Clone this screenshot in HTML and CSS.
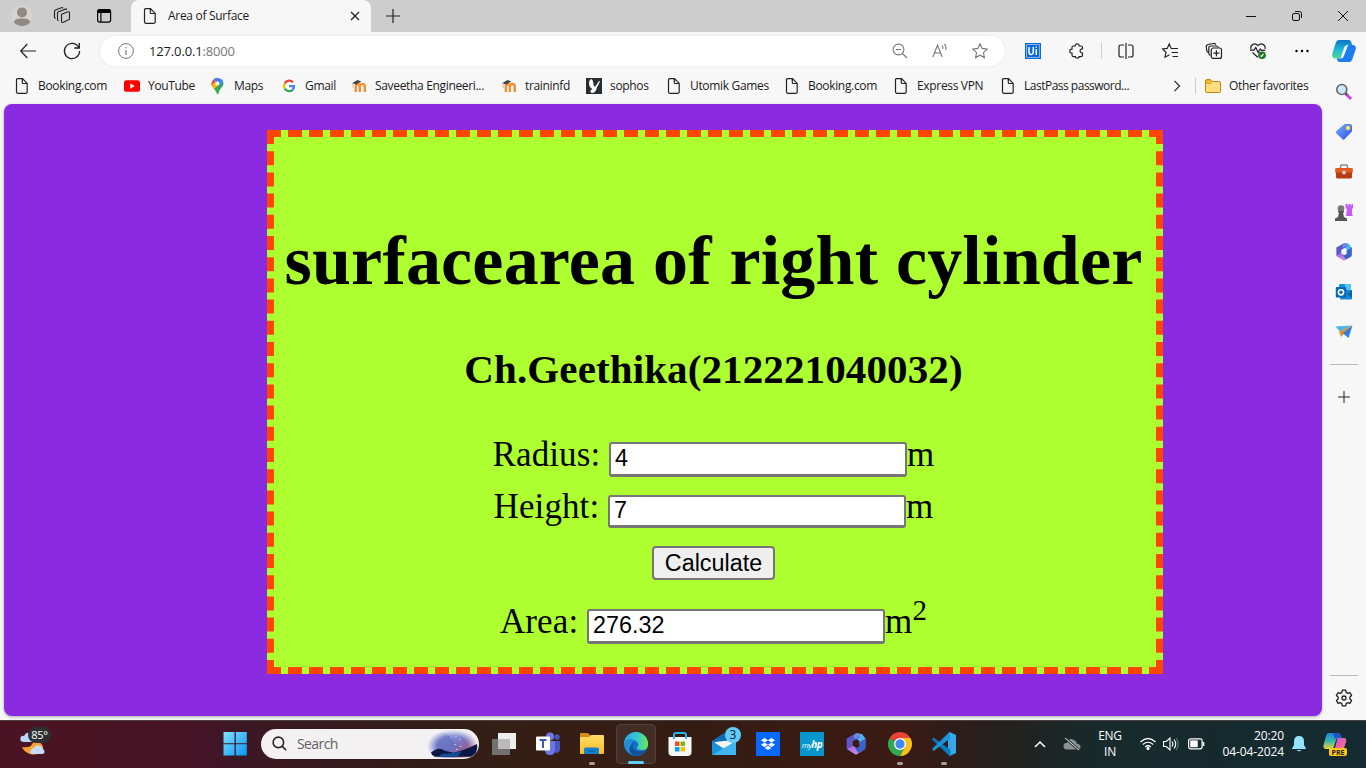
FILE: index.html
```html
<!DOCTYPE html>
<html lang="en">
<head>
<meta charset="utf-8">
<title>Area of Surface</title>
<link rel="stylesheet" href="styles.css">
</head>
<body>
<svg class="defs" width="0" height="0">
  <defs>
    <linearGradient id="gBlue" x1="0" y1="0" x2="1" y2="1"><stop offset="0" stop-color="#6fb4ff"/><stop offset="1" stop-color="#3b4be8"/></linearGradient>
    <linearGradient id="gWin" x1="0" y1="0" x2="1" y2="1"><stop offset="0" stop-color="#7fe0ff"/><stop offset="1" stop-color="#0a94f5"/></linearGradient>
    <linearGradient id="gFolder" x1="0" y1="0" x2="0" y2="1"><stop offset="0" stop-color="#ffdc6b"/><stop offset="1" stop-color="#f9bd22"/></linearGradient>
    <linearGradient id="gEdge" x1="0" y1="0" x2="1" y2="0"><stop offset="0" stop-color="#2aa7e8"/><stop offset=".55" stop-color="#35c8d2"/><stop offset="1" stop-color="#6fe64d"/></linearGradient>
    <linearGradient id="gPurple" x1="0" y1="0" x2="1" y2="1"><stop offset="0" stop-color="#a05be0"/><stop offset="1" stop-color="#d9a0ef"/></linearGradient>
    <linearGradient id="gSky" x1="0" y1="0" x2="1" y2="1"><stop offset="0" stop-color="#b8d4ff"/><stop offset=".5" stop-color="#7778ca"/><stop offset="1" stop-color="#bd3b48"/></linearGradient>
    <linearGradient id="gCop" x1="0" y1="0" x2="0" y2="1"><stop offset="0" stop-color="#0875c9"/><stop offset=".5" stop-color="#21b5d7"/><stop offset="1" stop-color="#50d993"/></linearGradient>
    <linearGradient id="gPreA" x1="0" y1="0" x2="0" y2="1"><stop offset="0" stop-color="#1e7ee8"/><stop offset=".5" stop-color="#35b8a8"/><stop offset="1" stop-color="#f2cf3a"/></linearGradient>
    <linearGradient id="gPink" x1="0" y1="0" x2="1" y2="1"><stop offset="0" stop-color="#b15cff"/><stop offset=".6" stop-color="#f3629c"/><stop offset="1" stop-color="#ff9d55"/></linearGradient>
    <radialGradient id="gFade"><stop offset=".6" stop-color="#fff"/><stop offset="1" stop-color="#000"/></radialGradient>
    <mask id="mFade"><ellipse cx="26" cy="16" rx="26" ry="17" fill="url(#gFade)"/></mask>
    <symbol id="page" viewBox="0 0 16 16"><path d="M3.500.7h5l4.700 4.700v8.300a1.500 1.500 0 0 1-1.500 1.600H4a1.500 1.500 0 0 1-1.500-1.600V1.700a1 1 0 0 1 1-1zM8.300.9v3.600a1 1 0 0 0 1 1h3.700" fill="none" stroke="#222" stroke-width="1.200"/></symbol>
    <symbol id="moodle" viewBox="0 0 16 16"><path d="M4.800 14V8.500c0-3 4-3 4 0V14M8.800 8.500c0-3.400 5-3.400 5 0V14" fill="none" stroke="#f59131" stroke-width="2.400"/><path d="M1 5.200 6.500 2l3.900 1.500L5 6.500z" fill="#444"/><path d="M2 5v5" stroke="#d2bca8"/></symbol>
    <symbol id="m365" viewBox="0 0 20 20"><path d="M10 .3 15.500 1 18.600 5v8L13 9.500V7L8 4z" fill="#4fb4ee"/><path d="M10 .3 1.500 5v9.500L7 11.500V7.800L13 4 14.500.8z" fill="#5c58cc"/><path d="m10 .3 4.500.5 1 .6L9 5.600 8 3z" fill="#79aef0" opacity=".6"/><path d="m1.500 14.500 5.500-3 4 2.300 5.500 2.200-6.500 3.700z" fill="url(#gPurple)"/><path d="M13 8.500 18.600 5v9.700L12 18.200 8.500 13l1.500 1 3-2z" fill="#3a62ca"/></symbol>
    <symbol id="copilot" viewBox="0 0 24 22"><path d="M7.500 0h8.700c2.100 0 3 1 3.400 3l.4 2h-5l-4.400 11c-.8 2-2 2.600-3.600 2.600H3C.6 18.600-.4 16 .4 13L3.700 3C4.400 1 5.400 0 7.500 0z" fill="url(#gCop)"/><path d="M16.600 22H7.900c-2 0-2.600-1.300-3.100-3.400H8c2 0 3-1 3.700-3l3-8C15.500 5.600 16.600 5 18 5h3c2.300 0 3.400 2 2.600 4.800l-3.300 9.400c-.7 2-1.700 2.800-3.700 2.800z" fill="#1b7df0"/><path d="M12.500 6.500c1-1 2.500-1.300 3.500-1.300l-4.300 11c-.6 1.400-1.700 2.200-3.200 2.300z" fill="#eefaff"/></symbol>
  </defs>
</svg>

<header class="tabs">
  <svg class="avatar" viewBox="0 0 22 22"><circle cx="11" cy="11" r="10.500" fill="#d7d4cf"/><circle cx="11" cy="7.400" r="5" fill="#8f8a84"/><path d="M2.800 17.200c1-3 3-3.600 8.200-3.600s7.200.6 8.200 3.600A10.500 10.500 0 0 1 2.800 17.200z" fill="#8f8a84"/></svg>
  <svg class="workspaces" viewBox="0 0 18 18" fill="none" stroke="#222" stroke-width="1.100"><path d="m8.500 7.300 6.500-2.500q1.500-.3 1.500 1v6.400L10 15.500q-1.500.3-1.500-1V7.300zM5.500 13.700q-1-.5-1-1.500V6.200q0-1 1-1.500l7.500-2.800 1 .6M2.500 11.600q-1-.5-1-1.500V4.600q0-1 1-1.500l6.500-2.500 1.200.4"/></svg>
  <svg class="tabmenu" viewBox="0 0 16 16"><rect x="1.600" y="1.600" width="13" height="12.500" rx="2" fill="none" stroke="#000" stroke-width="1.200"/><path d="M1.500 5V3q0-1.700 1.700-1.700H13Q14.700 1.300 14.700 3v2z"/><path d="M4.900 5v9" stroke="#000" stroke-width="1.200"/></svg>
  <div class="tab">
    <svg class="i16" viewBox="0 0 16 16"><use href="#page"/></svg>
    <span class="tab-title">Area of Surface</span>
    <svg class="close" viewBox="0 0 10 10"><path d="m1 1 8 8M9 1 1 9" stroke="#222" stroke-width="1.300"/></svg>
  </div>
  <svg class="newtab" viewBox="0 0 14 14"><path d="M7 0v14M0 7h14" stroke="#222" stroke-width="1.200"/></svg>
  <div class="window-buttons">
    <svg viewBox="0 0 12 12"><path d="M1 6.500h10" stroke="#111"/></svg>
    <svg viewBox="0 0 12 12" fill="none" stroke="#111"><rect x="1.500" y="3.500" width="7" height="7" rx="1.500"/><path d="M4 1.500h4.500q2 0 2 2V8"/></svg>
    <svg viewBox="0 0 12 12"><path d="m1 1 10 10M11 1 1 11" stroke="#111"/></svg>
  </div>
</header>

<nav class="toolbar">
  <svg class="back" viewBox="0 0 16 16" fill="none" stroke="#222" stroke-width="1.200"><path d="M16 8H.8M7.300 1 .7 8l6.600 7"/></svg>
  <svg class="reload" viewBox="0 0 18 18" fill="none" stroke="#222" stroke-width="1.300"><path d="M15.800 5.600A7.600 7.600 0 1 0 16.600 9M16.300 1v5h-5"/></svg>
  <div class="address">
    <svg class="i16 info" viewBox="0 0 16 16"><circle cx="8" cy="8" r="7.400" fill="none" stroke="#767676"/><path d="M8 7v5M8 4v1.300" stroke="#767676" stroke-width="1.200"/></svg>
    <span class="url">127.0.0.1<i>:8000</i></span>
    <svg class="i16 zoom" viewBox="0 0 16 16" fill="none" stroke="#777" stroke-width="1.100"><circle cx="6.500" cy="6.500" r="5.400"/><path d="m10.500 10.500 4.500 4.500M4 6.500h5"/></svg>
    <svg class="i16 aloud" viewBox="0 0 16 16" fill="none" stroke="#777" stroke-width="1.100"><path d="M.8 14 5.500 2.300 10.200 14M2.500 10h6M10 2.500q1.500 1.500.7 3.500M12.300.8q2.600 2.700 1.200 6"/></svg>
    <svg class="i16" viewBox="0 0 16 16" fill="none" stroke="#777" stroke-width="1.100"><path d="m8 .9 2.100 4.500 5.100.7-3.700 3.500.9 5L8 12.200l-4.400 2.400.9-5L.8 6.100l5.100-.7z"/></svg>
  </div>
  <div class="tools">
    <svg class="t" viewBox="0 0 16 16"><rect width="16" height="16" fill="#0b68dd"/><rect x="1.700" y="1.700" width="12.600" height="12.600" fill="none" stroke="#d9e8fb" stroke-width=".6"/><path d="M4 4v5q0 2.500 2 2.500T8.300 9V4M11.300 6v6M11.300 3.600v1.200" fill="none" stroke="#fff" stroke-width="1.500"/></svg>
    <svg class="t" viewBox="0 0 16 16" fill="none" stroke="#222" stroke-width="1.200"><path d="M4 3h2.300C6 .2 10.500.2 10.200 3H12q1.500 0 1.500 1.500v1.300c-3.200-.3-3.200 4.500 0 4.200V12q0 1.600-1.500 1.600h-1.800c.3 2-4 2-3.900 0H4.500Q3 13.600 3 12V10.200C0 10.400 0 6 3 6.200V4.500Q3 3 4 3z"/></svg>
    <div class="sep"></div>
    <svg class="t" viewBox="0 0 16 16" fill="none" stroke="#222" stroke-width="1.200"><path d="M6 2H3Q1 2 1 4v8q0 2 2 2h3M10 2h3q2 0 2 2v8q0 2-2 2h-3M8 0v16"/></svg>
    <svg class="t" viewBox="0 0 16 16" fill="none" stroke="#222" stroke-width="1.200"><path d="M16 5.500H9.200L7.200 1 5.200 5.400.6 6 4 9.400 3 14.200l4.500-2.400M9.500 9.500H16M10.500 13.500H16"/></svg>
    <svg class="t" viewBox="0 0 16 16" fill="none" stroke="#222" stroke-width="1.200"><path d="M2.300 9.500Q1 9 .8 7.800L.3 4Q0 2 2 1.500l5.500-1q1.800-.2 2.300 1.300M4.500 12.500Q2.800 12 2.800 10V5q0-2 2-2h5.500q1.500 0 2.200 1.500"/><rect x="5.300" y="5" width="10.200" height="10.400" rx="2"/><path d="M10.400 7.200v6M7.400 10.200h6"/></svg>
    <svg class="t" viewBox="0 0 16 16" fill="none" stroke="#222" stroke-width="1.200"><path d="M1 6C0 1.500 5-.8 8 2.700 11-.8 16 1.500 15 6M0 7.200h4L5.800 4.500l2.400 5 2-3.500 1.300 1.300H15M2.500 9.500 8 14.500"/><circle cx="12" cy="12.200" r="3.800" fill="#15771b" stroke="none"/><path d="m10.500 12.500 1 1 2-2.600" stroke="#fff"/></svg>
    <svg class="t" viewBox="0 0 16 16"><circle cx="2.500" cy="8" r="1.200"/><circle cx="8" cy="8" r="1.200"/><circle cx="13.500" cy="8" r="1.200"/></svg>
  </div>
  <svg class="cop" viewBox="0 0 24 22"><use href="#copilot"/></svg>
</nav>

<nav class="bookmarks">
  <a><svg class="i16"><use href="#page"/></svg><span>Booking.com</span></a>
  <a><svg class="i16" viewBox="0 0 16 16"><rect y="2.300" width="16" height="11.500" rx="2.600" fill="#f00"/><path d="m6.300 5.500 4.500 2.600-4.500 2.600z" fill="#fff"/></svg><span>YouTube</span></a>
  <a><svg class="i16" viewBox="0 0 16 16"><path d="M7 16C6 11.500 1.500 9.500 1.500 5.600L8 5l5.500-.8c.4 5-4.500 6-5 11.800z" fill="#35a853"/><path d="M2.900 2.200A5.500 5.500 0 0 1 9.500.3L6 5 2 8.500C1.200 6 1.500 3.500 2.900 2.200z" fill="#ea4335"/><path d="M4 1.200Q8-1.500 12 1.600q1 .9 1.300 2L8 9 5 4.500z" fill="#4285f4"/><path d="m1.800 7 4-4 2 5-4 3z" fill="#fbbc04"/><circle cx="7.500" cy="5.500" r="2" fill="#fff"/></svg><span>Maps</span></a>
  <a><svg class="i16" viewBox="0 0 16 16" fill="none" stroke-width="2.300"><circle cx="8" cy="8" r="8" fill="#fff"/><path d="M12 4.300A5 5 0 0 0 3.700 5.500" stroke="#ea4335"/><path d="M3.700 5.500a5 5 0 0 0 0 5" stroke="#fbbc04"/><path d="M3.700 10.500A5 5 0 0 0 11.600 11.800" stroke="#34a853"/><path d="M11.500 11.900Q13 10.500 13 8.200H8" stroke="#4285f4"/></svg><span>Gmail</span></a>
  <a><svg class="i16"><use href="#moodle"/></svg><span>Saveetha Engineeri...</span></a>
  <a><svg class="i16"><use href="#moodle"/></svg><span>traininfd</span></a>
  <a><svg class="i16" viewBox="0 0 16 16"><rect width="16" height="16" fill="#292d32"/><path d="M5 1q2.300.5 2.500 6L9 9l4-6 1 .5L10.700 10q-.7 5-5.200 5l-1.300-2 2-2Q2 8 3.300 3z" fill="#fff"/></svg><span>sophos</span></a>
  <a><svg class="i16"><use href="#page"/></svg><span>Utomik Games</span></a>
  <a><svg class="i16"><use href="#page"/></svg><span>Booking.com</span></a>
  <a><svg class="i16"><use href="#page"/></svg><span>Express VPN</span></a>
  <a class="tight"><svg class="i16"><use href="#page"/></svg><span>LastPass password...</span></a>
  <svg class="more" viewBox="0 0 8 14"><path d="m1 1 6 6-6 6" fill="none" stroke="#222" stroke-width="1.300"/></svg>
  <a class="other"><svg class="i16" viewBox="0 0 16 16"><path d="M.5 3q0-1.500 1.500-1.500h3.500L7.500 3.500H14q1.500 0 1.500 1.500v8q0 1.500-1.500 1.500H2Q.5 14.500.5 13z" fill="#ffdc7c" stroke="#b78a18"/><path d="M.8 3q0-1.200 1.200-1.200h3.500l1.600 1.800-1.600 1.900H.8z" fill="#f4bd27" stroke="#b78a18" stroke-width=".6"/></svg><span>Other favorites</span></a>
</nav>

<div class="middle">
  <main class="viewport">
    <div class="box">
      <h1>surfacearea of right cylinder</h1>
      <h3>Ch.Geethika(212221040032)</h3>
      <div class="row">Radius: <input type="text" value="4">m</div>
      <div class="row">Height: <input class="short" type="text" value="7">m</div>
      <div class="row action"><button type="button">Calculate</button></div>
      <div class="row result">Area: <input type="text" value="276.32">m<sup>2</sup></div>
    </div>
  </main>
  <aside class="sidebar">
    <svg viewBox="0 0 18 18"><path d="m11 11 5 5" stroke="#c645f2" stroke-width="3"/><path d="m10 10 2 2" stroke="#555" stroke-width="2"/><circle cx="6.800" cy="6.500" r="5" fill="#cceafd" stroke="#666" stroke-width="1.600"/></svg>
    <svg viewBox="0 0 18 18"><path d="M9.500 1h5.500q2 0 2 2v5.500l-7.500 7.700q-1 1-2 0L1.200 10.300q-.8-1 0-2z" fill="url(#gBlue)"/><circle cx="13" cy="5" r="2.200" fill="#ffd44b"/><circle cx="13" cy="5" r=".8" fill="#fff"/></svg>
    <svg viewBox="0 0 18 18"><path d="M5.500 5V3.500q0-1.500 1.500-1.500h4q1.500 0 1.500 1.500V5" fill="none" stroke="#888" stroke-width="1.500"/><rect x=".2" y="5" width="17.600" height="5" rx="1" fill="#e65722"/><path d="M1 9.500h16V14q0 1.500-1.500 1.500h-13Q1 15.500 1 14z" fill="#b83b12"/><circle cx="9" cy="9.500" r="2" fill="#ccc"/></svg>
    <svg viewBox="0 0 18 18"><path d="M10.500 1h2v1.500h1V1h2v1.500h1V1H18v4l-1 1v5l1 2h-7l1-7-1.500-1z" fill="#c55cf5"/><circle cx="6" cy="5.500" r="3.300" fill="#777"/><path d="M3 8h6v1.500H8L9 14l3 1.500V18H0v-2.500L3 14l1-4.500H3z" fill="#555"/></svg>
    <svg viewBox="0 0 20 20"><use href="#m365"/></svg>
    <svg viewBox="0 0 18 18"><path d="M4 1.500Q4 1 5 1h10q1 0 1 1v5H4z" fill="#1594e3"/><path d="M10 1h6v6h-6z" fill="#52c8f5"/><path d="M5 7h12v8.500q0 1-1 1H6q-1 0-1-1z" fill="#1689d8"/><path d="m17 7-5 4 5 4z" fill="#0766b4"/><rect x=".8" y="4" width="10.500" height="10.500" rx="1" fill="#0967b7"/><circle cx="6" cy="9.300" r="2.600" fill="none" stroke="#fff" stroke-width="1.600"/></svg>
    <svg viewBox="0 0 18 18"><path d="M.5 3.500 17.500 2.500 5 8.500z" fill="#45b6f0"/><path d="m17.500 2.500-13.500 6L6 14l3-3z" fill="#e3952d"/><path d="m17.500 2.500-9.800 7.800L13.500 15z" fill="#2c83df"/></svg>
    <hr>
    <svg class="plus" viewBox="0 0 12 12"><path d="M6 0v12M0 6h12" stroke="#222"/></svg>
    <div class="spring"></div>
    <hr>
    <svg class="gear" viewBox="0 0 18 18" fill="none" stroke="#222" stroke-width="1.300"><path d="m7.300 1.200-.5 2.300-1.500.9-2.200-.7-1.700 2.900L3.100 8v2l-1.700 1.500 1.700 2.900 2.200-.7 1.500.9.500 2.200h3.400l.5-2.200 1.500-.9 2.200.7 1.700-2.900L14.900 10V8l1.700-1.400-1.700-2.900-2.200.7-1.500-.9-.5-2.300z" stroke-linejoin="round"/><circle cx="9" cy="9" r="2"/></svg>
  </aside>
</div>

<footer class="taskbar">
  <div class="weather">
    <svg viewBox="0 0 28 26"><path d="M4 12Q0 12 .3 8.500T4 6q2-4 5-3t3 9z" fill="#bed5fb"/><path d="M2 17q10 2 12-7c7 2 10 5 9 11Q17 26 10 24q-6-2-8-7z" fill="#f5a52e"/><path d="M12 24q-3-1-1-4 1-2 3-2 2-4 6-2 2 0 2.500 3 2 0 2 2.500T22 24z" fill="#c5dbff"/></svg>
    <span>85°</span>
  </div>
  <div class="apps">
    <div class="app"><svg viewBox="0 0 24 24"><path d="M.5 0h11v11.300H.5zm12.300 0h11v11.300h-11zM.5 12.200h11v11.300H.5zm12.300 0h11v11.300h-11z" fill="url(#gWin)"/></svg></div>
    <div class="search">
      <svg class="glass" viewBox="0 0 16 16" fill="none" stroke="#292929" stroke-width="1.700"><circle cx="6.800" cy="6.800" r="5.600"/><path d="m11 11 4 4"/></svg>
      <span>Search</span>
      <svg class="art" viewBox="0 0 52 28"><g mask="url(#mFade)"><path d="M0 0h52v28H0z" fill="url(#gSky)"/><path d="M0 8C15-4 24 3 31 18L20 25H0z" fill="#6471bd" opacity=".7"/></g><path d="M4 23q8-7 14-2l9 2 10-3 5-2 9-4q1 6-2 10l-4 3H8q-3-1-4-4z" fill="#0b1643"/><path d="M15 24q14 0 20-3l-3 6H12z" fill="#114d92"/><path d="M24 7h1v1h-1zm5-1h1v1h-1zm4 3h1v1h-1zm-5 5h1v1h-1zm6 2h1v1h-1zm-4 3h1v1h-1z" fill="#fff"/></svg>
    </div>
    <div class="app"><svg viewBox="0 0 24 24"><rect x="6" y="1" width="18" height="16" fill="#eee"/><path d="M0 7h18v16H0z" fill="#737170"/><path d="M6 7h12v10H6z" fill="#bbb"/></svg></div>
    <div class="app"><svg viewBox="0 0 24 24"><circle cx="14" cy="4.500" r="4" fill="#7078e4"/><circle cx="21" cy="5" r="2.700" fill="#4b55c1"/><path d="M17 9h7v8q0 4-5 4z" fill="#4b55c1"/><path d="M9 9h10v9q0 5-5 5t-5-5z" fill="#6d77e2"/><rect y="4.500" width="14" height="14" rx="1" fill="#fff"/><path d="M3.500 8h7M7 8v8" stroke="#4854bd" stroke-width="2"/></svg></div>
    <div class="app open"><svg viewBox="0 0 24 24"><path d="M0 2q0-1 1-1h7l2 2v5H0z" fill="#d48d10"/><path d="M0 6q0-1 1-1h8l2-2h12q1 0 1 1v17q0 1-1 1H0z" fill="url(#gFolder)"/><path d="M4 22v-5q0-1.500 1.500-1.500h12q1.500 0 1.500 1.500v5z" fill="#1580cf"/><path d="M8 19h7" stroke="#075998"/></svg></div>
    <div class="app active"><svg viewBox="0 0 24 24"><circle cx="12" cy="12" r="12" fill="#126fc1"/><path d="M0 12A12 12 0 0 1 24 12c0 4-2 6-6 6q-6 0-5-2.500Q16 12 12 9 7 6 3 9z" fill="url(#gEdge)"/><path d="M11 9C5 9 6 21 17 22A12 12 0 0 1 0 11Q5 4 11 9z" fill="#218ed3"/><path d="M10.500 10C4 17 14 22 22 18q-5 7-13 5-8-6 1.500-13z" fill="#124f96"/></svg></div>
    <div class="app"><svg viewBox="0 0 24 24"><path d="M6 7V3q0-2 2-2h8q2 0 2 2v4" fill="none" stroke="#27b5ed" stroke-width="2"/><path d="M.5 5h23v15q0 4-4 4h-15q-4 0-4-4z" fill="#f7f7f7"/><path d="M6 5v2M18 5v2" stroke="#27b5ed" stroke-width="2"/><path d="M7 9.500h4.500V14H7z" fill="#f25022"/><path d="M12.500 9.500H17V14h-4.500z" fill="#7fba00"/><path d="M7 15h4.500v4.500H7z" fill="#00a4ef"/><path d="M12.500 15H17v4.500h-4.500z" fill="#ffb900"/></svg></div>
    <div class="app mail"><svg viewBox="0 0 24 24"><path d="M0 9 12 1l12 8v14H0z" fill="#116bb5"/><path d="m3 10 18-2v7l-9 3-9-3z" fill="#f6f6f6"/><path d="m0 9 14 9L0 23z" fill="#1a91dc"/><path d="M24 9v14H0z" fill="#3fb4ee"/></svg><b>3</b></div>
    <div class="app"><svg viewBox="0 0 24 24"><path d="M0 0h24v24H0z" fill="#0868fd"/><path d="m8.500 6 3.500 2.200L8.500 10.500 5 8.200zm7 0L19 8.200l-3.500 2.300L12 8.200zm-7 4.500L12 12.800 8.500 15 5 12.800zm7 0 3.500 2.300-3.500 2.200-3.500-2.200zM12 13.700l3.400 2.200L12 18.100l-3.400-2.200z" fill="#fff"/></svg></div>
    <div class="app hp"><span>my<b>hp</b></span></div>
    <div class="app"><svg class="m" viewBox="0 0 20 20"><use href="#m365"/></svg></div>
    <div class="app open"><svg viewBox="0 0 24 24"><path d="M12 12 1.600 6A12 12 0 0 1 22.400 6z" fill="#ea4335"/><path d="M12 12 1.600 6A12 12 0 0 0 12 24l5-9z" fill="#31a853"/><path d="M12 6h10.400A12 12 0 0 1 12 24l5-9z" fill="#fbc116"/><circle cx="12" cy="12" r="6" fill="#fff"/><circle cx="12" cy="12" r="4.700" fill="#4285f4"/></svg></div>
    <div class="app open"><svg viewBox="0 0 24 24"><path d="M17.500 0 24 3v18l-6.500 3-1.500-2V2z" fill="#37a8ee"/><path d="M18 6.500v11L1.500 5.500l-1.500 2L16.500 23l2 1z" fill="#087ac2"/><path d="m17.500 0 .5 6.500L1.700 19 0 17z" fill="#1d91da"/></svg></div>
  </div>
  <div class="tray">
    <svg class="chev" viewBox="0 0 12 8"><path d="m1 7 5-5 5 5" fill="none" stroke="#fff" stroke-width="1.500"/></svg>
    <svg class="cloud" viewBox="0 0 18 14"><path d="M4 12.500Q.5 12.500.5 9T4 6Q6 .5 10 2.500t3.500 4Q17.500 7 17.500 10T14 12.500z" fill="#8c9292"/><path d="m2 1 14 12" stroke="#253134" stroke-width="2.400"/><path d="m2 1 14 12" stroke="#e5e5e5"/></svg>
    <div class="lang">ENG<br>IN</div>
    <svg class="wifi" viewBox="0 0 16 14" fill="none" stroke="#fff" stroke-width="1.200"><path d="M.5 5q7.500-7 15 0M2.800 7.500q5.200-4.500 10.400 0M5.200 10q2.800-2.500 5.600 0"/><circle cx="8" cy="11.500" r="1" fill="#fff"/></svg>
    <svg class="sound" viewBox="0 0 16 14" fill="none" stroke="#fff" stroke-width="1.100"><path d="M.6 4.500h2.700L7 1v12L3.300 9.500H.6zM9 4.500q2 2.500 0 5M11 2.500q3.500 4.500 0 9"/><path d="M13.200 1q4 6 0 12" stroke="#65777a"/></svg>
    <svg class="battery" viewBox="0 0 17 12"><rect x=".6" y=".8" width="13.500" height="10" rx="2" fill="none" stroke="#fff" stroke-width="1.200"/><rect x="2.200" y="2.400" width="7.500" height="6.800" fill="#fff"/><path d="M15.500 4v4" stroke="#fff" stroke-width="1.600"/></svg>
    <div class="clock">20:20<br>04-04-2024</div>
    <svg class="bell" viewBox="0 0 14 16"><path d="M7 0q5 0 5 5.500V9l2 3.500v.5H0v-.5L2 9V5.500Q2 0 7 0zM4.500 14h5Q7 16.500 4.500 14z" fill="#91e3ff"/></svg>
    <svg class="pre" viewBox="0 0 24 24"><path d="M6 1h9q2.500 0 3.500 4.500h-4.500L10 17H3q-3 0-2.500-4L3 4q.7-3 3-3z" fill="url(#gPreA)"/><path d="M10 1h5q2.500 0 3.500 4.500h-5q-1 0-1.500 2z" fill="#1a55c8"/><path d="M14.500 6H21q3 0 2 4l-2 6-8 4H8q3 0 4-4z" fill="url(#gPink)"/><rect x="6" y="16" width="18" height="8" rx="2" fill="#ffc814"/><text x="15" y="22.600" text-anchor="middle">PRE</text></svg>
  </div>
</footer>
</body>
</html>
```
FILE: styles.css
```css
* { box-sizing: border-box; }
body { margin: 0; width: 1366px; height: 768px; overflow: hidden; display: flex; flex-direction: column; background: #f7f7f7; font: 12px/16px "Open Sans", sans-serif; color: #1b1b1b; }
svg { display: block; flex: none; overflow: visible; }
.defs { position: absolute; }
.i16 { width: 16px; height: 16px; }

.tabs { height: 32px; flex: none; background: #cdcdcd; display: flex; align-items: center; padding-left: 11px; }
.avatar { width: 22px; height: 22px; }
.workspaces { width: 18px; height: 18px; margin-left: 20px; }
.tabmenu { width: 16px; height: 16px; margin-left: 25px; }
.tab { width: 240px; height: 32px; margin-left: 19px; background: #f7f7f7; border-radius: 8px 8px 0 0; display: flex; align-items: center; padding: 0 11px; }
.tab-title { margin-left: 10px; flex: 1; letter-spacing: -.3px; }
.close { width: 10px; height: 10px; }
.newtab { width: 14px; height: 14px; margin-left: 15px; }
.window-buttons { margin-left: auto; display: flex; gap: 34px; padding-right: 17px; }
.window-buttons svg { width: 12px; height: 12px; }

.toolbar { height: 38px; flex: none; display: flex; align-items: center; padding-left: 20px; }
.back { width: 16px; height: 16px; }
.reload { width: 18px; height: 18px; margin-left: 27px; }
.address { width: 905px; height: 30px; margin-left: 19px; border-radius: 15px; background: #fff; box-shadow: 0 0 3px #e4e4e4; display: flex; align-items: center; padding: 0 17px 0 18px; }
.url { margin-left: 15px; flex: 1; font-size: 13px; letter-spacing: -.15px; }
.url i { font-style: normal; color: #767676; }
.zoom, .aloud { margin-right: 24px; }
.tools { margin-left: 20px; display: flex; gap: 28px; align-items: center; }
.tools .t { width: 16px; height: 16px; }
.sep { width: 1px; height: 16px; margin: 0 -12px; background: #ccc; }
.cop { width: 24px; height: 22px; margin-left: 22px; }

.bookmarks { height: 34px; flex: none; display: grid; grid-template-columns: 110px 86px 71px 70px 150px 85px 80px 118px 109px 107px 173px 21px 1fr; padding: 0 0 2px 14px; align-items: center; }
.bookmarks a { display: flex; align-items: center; gap: 8px; white-space: nowrap; letter-spacing: -.33px; }
.bookmarks .tight { letter-spacing: -.5px; }
.bookmarks .more { width: 8px; height: 12px; }
.bookmarks .other { border-left: 1px solid #ccc; padding-left: 9px; margin-left: 1px; }

.middle { height: 616px; flex: none; display: flex; padding-left: 4px; }
.viewport { width: 1318px; height: 612px; background: #8a2be2; border-radius: 8px; padding: 26px 0 0 263px; box-shadow: 0 1px 3px #aaa; }
.box { width: 896px; height: 544px; background: #adff2f; border: 7px dashed #ff4500; text-align: center; color: #000; font: 35px/52px "Liberation Serif", serif; padding-right: 3px; }
.box h1 { margin: 84px 0 0; font-size: 70px; line-height: 80px; white-space: nowrap; letter-spacing: .2px; }
.box h3 { margin: 44px 0 0; font-size: 41px; line-height: 48px; letter-spacing: .12px; }
.row { height: 52px; white-space: nowrap; }
.box h3 + .row { margin-top: 36px; }
.row input { width: 298px; height: 35px; font: 23.33px "Liberation Sans", sans-serif; border: 2px solid #767676; border-bottom-width: 3px; border-radius: 3px; padding: 1px 4px; color: #000; background: #fff; }
.row:not(.action) { letter-spacing: .1px; }
.row .short { height: 33px; }
.row button { display: block; width: 123px; height: 34px; margin: 0 auto; padding: 0; font: 23.33px "Liberation Sans", sans-serif; border: 2px solid #767676; border-radius: 4px; background: #efefef; color: #000; }
.action { padding-top: 13px; }
.result { margin-top: 11px; }
.row sup { font-size: 29px; line-height: 0; vertical-align: 13px; }

.sidebar { width: 44px; display: flex; flex-direction: column; align-items: center; margin-top: -21px; height: 637px; flex: none; }
.sidebar svg { width: 18px; height: 18px; margin-bottom: 22px; }
.sidebar hr { width: 28px; height: 1px; border: 0; margin: 1px 0 26px; background: #bbb; flex: none; }
.sidebar .plus { width: 12px; height: 12px; }
.spring { flex: 1; }
.sidebar .gear { margin: -13px 0 13px; }

.taskbar { height: 48px; flex: none; display: flex; align-items: center; background: linear-gradient(90deg, #4b1323 0, #471426 190px, #3c1725 235px, #331c19 410px, #351e14 500px, #351c13 700px, #3b1a14 900px, #24201e 1000px, #182a2c 1100px, #142b31 1366px); border-top: 1px solid #4b3e3e; color: #fff; }
.weather { width: 213px; padding-left: 20px; display: flex; margin-top: -4px; }
.weather svg { width: 28px; height: 26px; }
.weather span { width: 23px; height: 16px; margin: -3px 0 0 -20px; border-radius: 8px; background: #2d3032; font-size: 11px; line-height: 16px; text-align: center; letter-spacing: -.3px; position: relative; }
.apps { display: flex; align-items: center; margin-top: -2px; }
.app { width: 44px; height: 40px; display: flex; align-items: center; justify-content: center; position: relative; }
.app svg { width: 24px; height: 24px; }
.app .m { width: 22px; height: 22px; }
.search { width: 218px; height: 30px; margin: 0 3px 0 4px; border-radius: 15px; background: #f3f1f2; display: flex; align-items: center; color: #616161; font-size: 14px; letter-spacing: -.6px; padding: 0 1px 0 11px; }
.search .glass { width: 15px; height: 15px; }
.search span { margin-left: 10px; flex: 1; }
.search .art { width: 51px; height: 28px; }
.open::after { content: ""; position: absolute; bottom: -1px; width: 6px; height: 3px; border-radius: 2px; background: #a6a09e; }
.active::before { content: ""; position: absolute; inset: 0 2px; border: 1px solid #52403b; border-radius: 4px; background: #ffffff12; }
.active::after { content: ""; position: absolute; bottom: 0; width: 16px; height: 3px; border-radius: 2px; background: #60cdff; }
.active svg { position: relative; }
.mail b { position: absolute; top: 3px; left: 23px; width: 16px; height: 16px; border-radius: 8px; background: #60cdff; color: #111; text-align: center; font-weight: 400; line-height: 16px; }
.hp span { width: 24px; height: 24px; border-radius: 1px; background: #0796ce; font-size: 8px; line-height: 24px; font-style: italic; text-align: center; letter-spacing: -.5px; }
.hp b { font-size: 10px; }
.tray { margin: -2px 0 0 auto; display: flex; align-items: center; padding-right: 19px; font-size: 12px; letter-spacing: -.25px; }
.chev { width: 12px; height: 8px; }
.cloud { width: 18px; height: 14px; margin-left: 17px; }
.lang { width: 40px; margin-left: 9px; text-align: center; }
.wifi { width: 16px; height: 14px; margin-left: 10px; }
.sound { width: 16px; height: 14px; margin-left: 7px; }
.battery { width: 17px; height: 12px; margin-left: 9px; }
.clock { width: 70px; margin-left: 9px; text-align: right; white-space: nowrap; letter-spacing: -.1px; }
.bell { width: 14px; height: 16px; margin-left: 8px; }
.pre { width: 24px; height: 24px; margin-left: 17px; }
.pre text { font: 700 7px "Open Sans", sans-serif; fill: #222; letter-spacing: 0; }
```
